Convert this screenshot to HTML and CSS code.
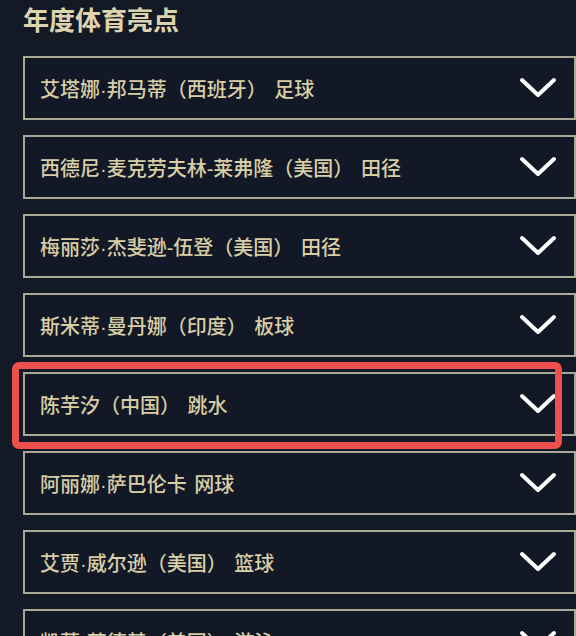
FILE: index.html
```html
<!DOCTYPE html>
<html lang="zh-CN">
<head>
    <meta charset="UTF-8">
    <meta name="viewport" content="width=device-width, initial-scale=1.0">
    <title>年度体育亮点</title>
    <link rel="stylesheet" href="styles.css">
</head>
<body>
    <div class="page">
        <h2 class="titulo">年度体育亮点</h2>

        <div class="lista">
            <div class="item">
                <span class="nombre">艾塔娜·邦马蒂（西班牙） 足球</span>
                <svg class="flecha" viewBox="0 0 38 24"><polyline points="3,4 19,19 35,4"/></svg>
            </div>
            <div class="item">
                <span class="nombre">西德尼·麦克劳夫林-莱弗隆（美国） 田径</span>
                <svg class="flecha" viewBox="0 0 38 24"><polyline points="3,4 19,19 35,4"/></svg>
            </div>
            <div class="item">
                <span class="nombre">梅丽莎·杰斐逊-伍登（美国） 田径</span>
                <svg class="flecha" viewBox="0 0 38 24"><polyline points="3,4 19,19 35,4"/></svg>
            </div>
            <div class="item">
                <span class="nombre">斯米蒂·曼丹娜（印度） 板球</span>
                <svg class="flecha" viewBox="0 0 38 24"><polyline points="3,4 19,19 35,4"/></svg>
            </div>
            <!-- marcado en rojo -->
            <div class="item destacado">
                <span class="nombre">陈芋汐（中国） 跳水</span>
                <svg class="flecha" viewBox="0 0 38 24"><polyline points="3,4 19,19 35,4"/></svg>
            </div>
            <div class="item">
                <span class="nombre">阿丽娜·萨巴伦卡 网球</span>
                <svg class="flecha" viewBox="0 0 38 24"><polyline points="3,4 19,19 35,4"/></svg>
            </div>
            <div class="item">
                <span class="nombre">艾贾·威尔逊（美国） 篮球</span>
                <svg class="flecha" viewBox="0 0 38 24"><polyline points="3,4 19,19 35,4"/></svg>
            </div>
            <div class="item">
                <span class="nombre">凯蒂·莱德基（美国） 游泳</span>
                <svg class="flecha" viewBox="0 0 38 24"><polyline points="3,4 19,19 35,4"/></svg>
            </div>
        </div>
    </div>
</body>
</html>
```

FILE: styles.css
```css
body {
    font-family: "Liberation Sans", "Noto Sans CJK SC", sans-serif;
    background-color: #131a26;
    margin: 0;
    padding: 0;
    color: #d8cea6;
    overflow: hidden;
}

.page {
    padding-left: 23px;
}

.titulo {
    margin: 0;
    font-size: 26px;
    line-height: 42px;
    font-weight: 700;
    color: #ddd3ad;
}

/* Lista de deportistas */
.lista {
    margin-top: 14px;
    display: flex;
    flex-direction: column;
    gap: 15px;
}

.item {
    position: relative;
    display: flex;
    align-items: center;
    justify-content: space-between;
    height: 64px;
    box-sizing: border-box;
    border: 2px solid #aba796;
    background-color: #121826;
    padding: 0 17px 0 15px;
}

.nombre {
    font-size: 20px;
    font-weight: 500;
    word-spacing: 2px;
    white-space: nowrap;
}

.flecha {
    width: 38px;
    height: 24px;
    flex-shrink: 0;
}

.flecha polyline {
    fill: none;
    stroke: #ffffff;
    stroke-width: 4;
    stroke-linecap: round;
    stroke-linejoin: round;
}

.destacado::after {
    content: "";
    position: absolute;
    top: -12px;
    left: -13px;
    right: 12px;
    bottom: -15px;
    border: 7px solid #ee4f4f;
    border-radius: 7px;
}
```
